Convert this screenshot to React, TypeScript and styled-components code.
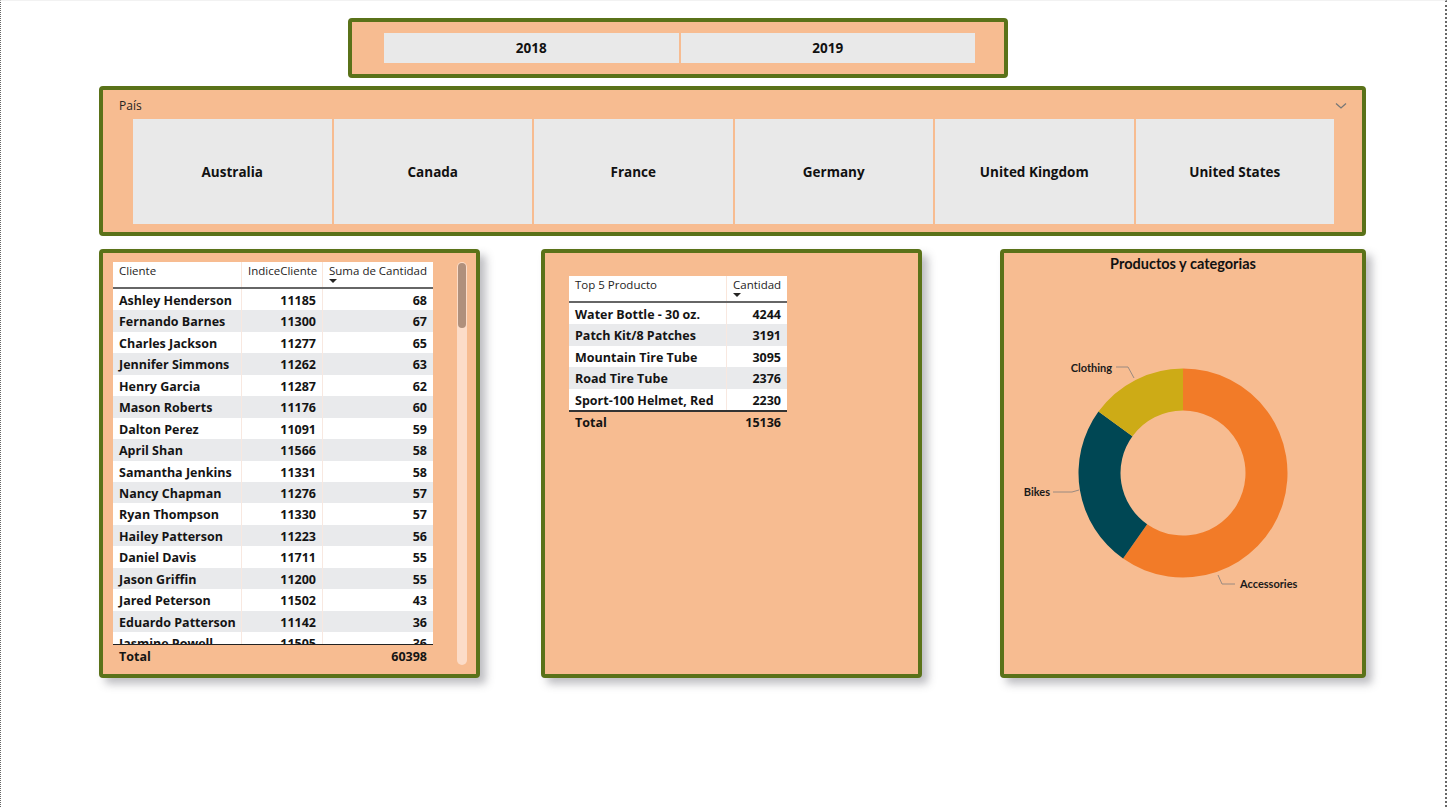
import React from 'react'
import styled, { createGlobalStyle } from 'styled-components'

const green = '#5a7219'
const peach = '#f7bc91'
const tileGrey = '#e9e9e9'
const ink = '#141414'

const GlobalStyle = createGlobalStyle`
  * { box-sizing: border-box; }
  body {
    margin: 0;
    background: #fff;
    font-family: "Open Sans", "Noto Sans", sans-serif;
    color: ${ink};
  }
`

const Page = styled.div`
  width: 1447px;
  height: 807px;
  border-left: 1px dotted #666;
  border-right: 2px dotted #666;
  border-top: 1px solid #f2f2f2;
  padding: 17px 0 0 98px;
  display: flex;
  flex-direction: column;
  align-items: flex-start;
  overflow: hidden;
`

const Panel = styled.div`
  border: 4px solid ${green};
  border-radius: 4px;
  background: ${peach};
`

const YearSlicer = styled(Panel)`
  width: 660px;
  height: 60px;
  margin-left: 249px;
  display: flex;
  align-items: center;
  gap: 2px;
  padding: 0 29px 0 32px;
`

const Tile = styled.div<{ $h: number }>`
  flex: 1;
  height: ${p => p.$h}px;
  background: ${tileGrey};
  display: flex;
  align-items: center;
  justify-content: center;
  font-size: 13.5px;
  font-weight: 700;
  color: #111;
`

const CountrySlicer = styled(Panel)`
  width: 1267px;
  height: 150px;
  margin-top: 8px;
  display: flex;
  flex-direction: column;
`

const SlicerHead = styled.div`
  height: 29px;
  display: flex;
  align-items: center;
  justify-content: space-between;
  padding: 2px 15px 0 16px;
  font-size: 12px;
  color: #252423;
`

const TileRow = styled.div`
  display: flex;
  gap: 2px;
  padding: 0 28px 0 30px;
`

const CardsRow = styled.div`
  display: flex;
  align-items: flex-start;
  margin-top: 13px;
`

const Card = styled(Panel)<{ $w: number; $gap?: number }>`
  width: ${p => p.$w}px;
  height: 429px;
  margin-left: ${p => p.$gap ?? 0}px;
  box-shadow: 6px 6px 9px rgba(70, 70, 80, 0.35);
`

const LeftCard = styled(Card)`
  display: flex;
  padding: 9px 0 0 10px;
`

const MiddleCard = styled(Card)`
  padding: 23px 0 0 24px;
`

const RightCard = styled(Card)`
  display: flex;
  flex-direction: column;
  align-items: center;
`

const TableBox = styled.div<{ $w: number }>`
  width: ${p => p.$w}px;
  display: flex;
  flex-direction: column;
`

const HeadRow = styled.div<{ $cols: string }>`
  display: grid;
  grid-template-columns: ${p => p.$cols};
  height: 27px;
  background: #fff;
  border-bottom: 2px solid #666;
`

const HeadCell = styled.div<{ $align?: string }>`
  padding: 1px 6px 0;
  font-size: 11.5px;
  color: #252423;
  text-align: ${p => p.$align ?? 'left'};
  border-right: 1px solid #fae6da;
  white-space: nowrap;
  &:last-child { border-right: none; }
`

const SortCaret = styled.div`
  width: 0;
  height: 0;
  margin-top: 1px;
  border-left: 4px solid transparent;
  border-right: 4px solid transparent;
  border-top: 4px solid #252423;
`

const Body = styled.div<{ $h?: number; $line: string }>`
  height: ${p => (p.$h ? `${p.$h}px` : 'auto')};
  overflow: hidden;
  border-bottom: ${p => p.$line};
`

const Row = styled.div<{ $cols: string; $alt: boolean }>`
  display: grid;
  grid-template-columns: ${p => p.$cols};
  height: 21.45px;
  background: ${p => (p.$alt ? '#e9eaec' : '#fff')};
`

const Cell = styled.div<{ $align?: string }>`
  padding: 1px 6px 0;
  font-size: 12.5px;
  font-weight: 700;
  line-height: 21px;
  text-align: ${p => p.$align ?? 'left'};
  white-space: nowrap;
  overflow: hidden;
  border-right: 1px solid #f8e8e0;
  &:last-child { border-right: none; }
`

const TotalRow = styled.div<{ $cols: string; $top?: number }>`
  display: grid;
  grid-template-columns: ${p => p.$cols};
  height: 22px;
  padding-top: ${p => p.$top ?? 0}px;
  font-size: 12.5px;
  font-weight: 700;
  line-height: 22px;
`

const TotalCell = styled.div<{ $align?: string }>`
  padding: 0 6px;
  text-align: ${p => p.$align ?? 'left'};
`

const ScrollTrack = styled.div`
  width: 10px;
  height: 403px;
  margin-left: 24px;
  border-radius: 5px;
  background: #fcdcc8;
  padding: 1px;
`

const ScrollThumb = styled.div`
  height: 65px;
  border-radius: 4px;
  background: #b0907c;
`

const ChartTitle = styled.div`
  padding-top: 2px;
  height: 22px;
  font-family: Lato, "Open Sans", sans-serif;
  font-size: 14.5px;
  font-weight: 700;
  color: #111;
`

const DonutLabel = styled.text`
  font-family: Lato, "Open Sans", sans-serif;
  font-size: 11px;
  font-weight: 700;
  fill: #1a1a1a;
`

const years = ['2018', '2019']
const countries = ['Australia', 'Canada', 'France', 'Germany', 'United Kingdom', 'United States']

const clients: [string, number, number][] = [
  ['Ashley Henderson', 11185, 68],
  ['Fernando Barnes', 11300, 67],
  ['Charles Jackson', 11277, 65],
  ['Jennifer Simmons', 11262, 63],
  ['Henry Garcia', 11287, 62],
  ['Mason Roberts', 11176, 60],
  ['Dalton Perez', 11091, 59],
  ['April Shan', 11566, 58],
  ['Samantha Jenkins', 11331, 58],
  ['Nancy Chapman', 11276, 57],
  ['Ryan Thompson', 11330, 57],
  ['Hailey Patterson', 11223, 56],
  ['Daniel Davis', 11711, 55],
  ['Jason Griffin', 11200, 55],
  ['Jared Peterson', 11502, 43],
  ['Eduardo Patterson', 11142, 36],
  ['Jasmine Powell', 11505, 36],
]

const products: [string, number][] = [
  ['Water Bottle - 30 oz.', 4244],
  ['Patch Kit/8 Patches', 3191],
  ['Mountain Tire Tube', 3095],
  ['Road Tire Tube', 2376],
  ['Sport-100 Helmet, Red', 2230],
]

const clientCols = '129px 81px 110px'
const productCols = '158px 60px'

const Chevron = () => (
  <svg width="12" height="8" viewBox="0 0 12 8">
    <polyline points="1,1.5 6,6 11,1.5" fill="none" stroke="#777" strokeWidth="1.3" />
  </svg>
)

const Donut = () => (
  <svg width="358" height="396" viewBox="0 0 358 396">
    <path d="M179 93.5 A104.5 104.5 0 1 1 119.06 283.6 L143.15 249.2 A62.5 62.5 0 1 0 179 135.5 Z" fill="#f27b28" />
    <path d="M119.06 283.6 A104.5 104.5 0 0 1 94.46 136.58 L128.44 161.26 A62.5 62.5 0 0 0 143.15 249.2 Z" fill="#004754" />
    <path d="M94.46 136.58 A104.5 104.5 0 0 1 179 93.5 L179 135.5 A62.5 62.5 0 0 0 128.44 161.26 Z" fill="#cdab16" />
    <g fill="none" stroke="#9a8a80" strokeWidth="1">
      <polyline points="112,92 124,92 130,103" />
      <polyline points="49,217 68,217 75,215" />
      <polyline points="214,300 218,309 231,309" />
    </g>
    <DonutLabel x="108" y="97" textAnchor="end">Clothing</DonutLabel>
    <DonutLabel x="46" y="221" textAnchor="end">Bikes</DonutLabel>
    <DonutLabel x="236" y="313">Accessories</DonutLabel>
  </svg>
)

export default function App() {
  return (
    <>
      <GlobalStyle />
      <Page>
        <YearSlicer>
          {years.map(y => (
            <Tile key={y} $h={30}>{y}</Tile>
          ))}
        </YearSlicer>

        <CountrySlicer>
          <SlicerHead>
            <span>País</span>
            <Chevron />
          </SlicerHead>
          <TileRow>
            {countries.map(c => (
              <Tile key={c} $h={105}>{c}</Tile>
            ))}
          </TileRow>
        </CountrySlicer>

        <CardsRow>
          <LeftCard $w={381}>
            <TableBox $w={320}>
              <HeadRow $cols={clientCols}>
                <HeadCell>Cliente</HeadCell>
                <HeadCell $align="right">IndiceCliente</HeadCell>
                <HeadCell>
                  Suma de Cantidad
                  <SortCaret />
                </HeadCell>
              </HeadRow>
              <Body $h={356} $line="1px solid #222">
                {clients.map(([name, idx, qty], i) => (
                  <Row key={name} $cols={clientCols} $alt={i % 2 === 1}>
                    <Cell>{name}</Cell>
                    <Cell $align="right">{idx}</Cell>
                    <Cell $align="right">{qty}</Cell>
                  </Row>
                ))}
              </Body>
              <TotalRow $cols="210px 110px" $top={1}>
                <TotalCell>Total</TotalCell>
                <TotalCell $align="right">60398</TotalCell>
              </TotalRow>
            </TableBox>
            <ScrollTrack>
              <ScrollThumb />
            </ScrollTrack>
          </LeftCard>

          <MiddleCard $w={381} $gap={61}>
            <TableBox $w={218}>
              <HeadRow $cols={productCols}>
                <HeadCell>Top 5 Producto</HeadCell>
                <HeadCell>
                  Cantidad
                  <SortCaret />
                </HeadCell>
              </HeadRow>
              <Body $line="2px solid #333">
                {products.map(([name, qty], i) => (
                  <Row key={name} $cols={productCols} $alt={i % 2 === 1}>
                    <Cell>{name}</Cell>
                    <Cell $align="right">{qty}</Cell>
                  </Row>
                ))}
              </Body>
              <TotalRow $cols={productCols}>
                <TotalCell>Total</TotalCell>
                <TotalCell $align="right">15136</TotalCell>
              </TotalRow>
            </TableBox>
          </MiddleCard>

          <RightCard $w={366} $gap={78}>
            <ChartTitle>Productos y categorias</ChartTitle>
            <Donut />
          </RightCard>
        </CardsRow>
      </Page>
    </>
  )
}
